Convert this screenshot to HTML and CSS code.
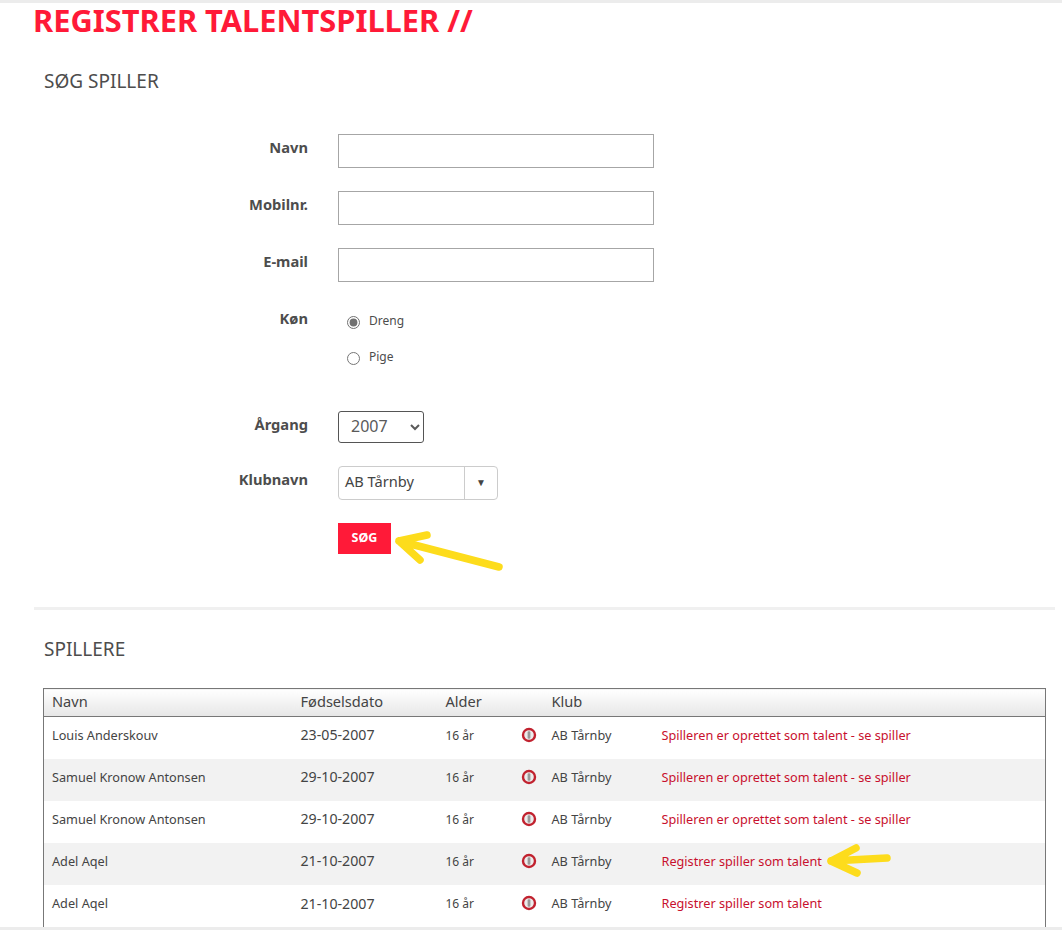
FILE: index.html
```html
<!DOCTYPE html>
<html lang="da">
<head>
  <meta charset="UTF-8">
  <title>Registrer talentspiller</title>
  <link rel="stylesheet" href="styles.css">
</head>
<body>
  <div class="edgeStrip topStrip"></div>

  <div class="page">
    <h1 class="pageTitle">REGISTRER TALENTSPILLER //</h1>

    <h2 class="sectionTitle searchTitle">SØG SPILLER</h2>

    <form class="searchForm">
      <label class="fieldLabel">Navn</label>
      <input class="textInput" type="text">

      <label class="fieldLabel">Mobilnr.</label>
      <input class="textInput" type="text">

      <label class="fieldLabel">E-mail</label>
      <input class="textInput" type="text">

      <label class="fieldLabel">Køn</label>
      <div class="radioGroup">
        <label class="radioRow"><input type="radio" name="gender" checked> Dreng</label>
        <label class="radioRow"><input type="radio" name="gender"> Pige</label>
      </div>

      <label class="fieldLabel">Årgang</label>
      <select class="yearSelect">
        <option>2007</option>
      </select>

      <label class="fieldLabel">Klubnavn</label>
      <div class="clubPicker">
        <span class="clubValue">AB Tårnby</span>
        <span class="clubArrow">▼</span>
      </div>

      <span></span>
      <div class="submitRow">
        <button class="searchBtn" type="button">SØG</button>
        <svg class="arrow searchArrow" width="120" height="48" viewBox="0 0 120 48">
          <path d="M111 40 L11 14 M11 14 L39 8 M11 14 L32 33"></path>
        </svg>
      </div>
    </form>

    <hr class="divider">

    <h2 class="sectionTitle">SPILLERE</h2>

    <table class="playerTable">
      <thead>
        <tr>
          <th class="colName">Navn</th>
          <th class="colBorn">Fødselsdato</th>
          <th class="colAge">Alder</th>
          <th class="colIcon"></th>
          <th class="colClub">Klub</th>
          <th></th>
        </tr>
      </thead>
      <tbody>
        <tr>
          <td>Louis Anderskouv</td>
          <td>23-05-2007</td>
          <td>16 år</td>
          <td><svg class="alertIcon" width="16" height="16" viewBox="0 0 16 16"><circle class="alertRing" cx="8" cy="8" r="6"></circle><rect class="alertMark" x="6.6" y="4.2" width="2.8" height="7.6" rx="1.2"></rect></svg></td>
          <td>AB Tårnby</td>
          <td><a class="rowLink" href="#">Spilleren er oprettet som talent - se spiller</a></td>
        </tr>
        <tr>
          <td>Samuel Kronow Antonsen</td>
          <td>29-10-2007</td>
          <td>16 år</td>
          <td><svg class="alertIcon" width="16" height="16" viewBox="0 0 16 16"><circle class="alertRing" cx="8" cy="8" r="6"></circle><rect class="alertMark" x="6.6" y="4.2" width="2.8" height="7.6" rx="1.2"></rect></svg></td>
          <td>AB Tårnby</td>
          <td><a class="rowLink" href="#">Spilleren er oprettet som talent - se spiller</a></td>
        </tr>
        <tr>
          <td>Samuel Kronow Antonsen</td>
          <td>29-10-2007</td>
          <td>16 år</td>
          <td><svg class="alertIcon" width="16" height="16" viewBox="0 0 16 16"><circle class="alertRing" cx="8" cy="8" r="6"></circle><rect class="alertMark" x="6.6" y="4.2" width="2.8" height="7.6" rx="1.2"></rect></svg></td>
          <td>AB Tårnby</td>
          <td><a class="rowLink" href="#">Spilleren er oprettet som talent - se spiller</a></td>
        </tr>
        <tr>
          <td>Adel Aqel</td>
          <td>21-10-2007</td>
          <td>16 år</td>
          <td><svg class="alertIcon" width="16" height="16" viewBox="0 0 16 16"><circle class="alertRing" cx="8" cy="8" r="6"></circle><rect class="alertMark" x="6.6" y="4.2" width="2.8" height="7.6" rx="1.2"></rect></svg></td>
          <td>AB Tårnby</td>
          <td class="linkCell">
            <a class="rowLink" href="#">Registrer spiller som talent</a>
            <svg class="arrow linkArrow" width="72" height="36" viewBox="0 0 72 36">
              <path d="M66 15 L10 18 M10 18 L35 5 M10 18 L36 30"></path>
            </svg>
          </td>
        </tr>
        <tr class="lastRow">
          <td>Adel Aqel</td>
          <td>21-10-2007</td>
          <td>16 år</td>
          <td><svg class="alertIcon" width="16" height="16" viewBox="0 0 16 16"><circle class="alertRing" cx="8" cy="8" r="6"></circle><rect class="alertMark" x="6.6" y="4.2" width="2.8" height="7.6" rx="1.2"></rect></svg></td>
          <td>AB Tårnby</td>
          <td><a class="rowLink" href="#">Registrer spiller som talent</a></td>
        </tr>
      </tbody>
    </table>
  </div>

  <div class="edgeStrip bottomStrip"></div>
</body>
</html>
```

FILE: styles.css
```css
html, body {
  margin: 0;
  padding: 0;
  height: 100%;
  overflow: hidden;
}

body {
  font-family: "Noto Sans", "Open Sans", sans-serif;
  color: #4d4d4d;
  background: #fff;
}

.edgeStrip {
  position: fixed;
  left: 0;
  right: 0;
  height: 3px;
  background: #ececec;
  z-index: 10;
}

.topStrip {
  top: 0;
}

.bottomStrip {
  bottom: 0;
}

.page {
  padding: 0 7px 0 34px;
}

.pageTitle {
  margin: 0 0 0 -1px;
  font-size: 30.8px;
  line-height: 40px;
  font-weight: 700;
  color: #ff1a38;
}

.sectionTitle {
  margin: 0 0 0 10px;
  font-size: 19px;
  line-height: 28px;
  font-weight: 400;
  color: #4d4d4d;
}

.searchTitle {
  margin-top: 27px;
}

.searchForm {
  display: grid;
  grid-template-columns: 274px 1fr;
  column-gap: 30px;
  align-items: start;
  margin-top: 39px;
}

.fieldLabel {
  font-size: 14.7px;
  line-height: 26px;
  font-weight: 700;
  text-align: right;
}

.textInput {
  box-sizing: border-box;
  display: block;
  width: 316px;
  height: 34px;
  margin-bottom: 23px;
  border: 1px solid #a6a6a6;
  background: #fff;
}

.radioGroup {
  display: flex;
  flex-direction: column;
  gap: 14px;
  height: 83px;
  padding: 5px 0 0 9px;
  box-sizing: border-box;
  margin-bottom: 23px;
}

.radioRow {
  display: flex;
  align-items: center;
  gap: 9px;
  font-size: 12px;
  line-height: 22px;
}

.radioRow input {
  margin: 3px 0 0;
  width: 13px;
  height: 13px;
  accent-color: #707070;
}

.yearSelect {
  display: block;
  width: 86px;
  height: 32px;
  margin-bottom: 23px;
  padding: 0 0 3px 8px;
  font-family: "Noto Sans", sans-serif;
  font-size: 16px;
  color: #5a5a5a;
  background: #fff;
  border: 1px solid #555;
  border-radius: 3px;
}

.clubPicker {
  box-sizing: border-box;
  display: flex;
  width: 160px;
  height: 34px;
  margin-bottom: 23px;
  border: 1px solid #ccc;
  border-radius: 4px;
  font-size: 14.6px;
  color: #444;
}

.clubValue {
  flex: 1;
  padding-left: 6px;
  line-height: 28px;
}

.clubArrow {
  width: 32px;
  border-left: 1px solid #ccc;
  font-size: 10px;
  line-height: 30px;
  text-align: center;
}

.submitRow {
  position: relative;
  height: 54px;
}

.searchBtn {
  display: block;
  width: 53px;
  height: 31px;
  padding: 0 0 3px;
  border: none;
  background: #ff1a38;
  color: #fff;
  font-family: "Noto Sans", sans-serif;
  font-size: 12.5px;
  font-weight: 700;
}

.arrow {
  position: absolute;
  fill: none;
  z-index: 2;
}

.arrow path {
  stroke: #fddc1c;
  stroke-width: 7.5;
  stroke-linecap: round;
  stroke-linejoin: round;
}

.searchArrow {
  left: 50px;
  top: 4px;
}

.divider {
  height: 3px;
  margin: 30px 0 0;
  border: none;
  background: #f0f0f0;
  width: 1021px;
}

.divider + .sectionTitle {
  margin-top: 25px;
}

.playerTable {
  width: 1003px;
  margin: 25px 0 0 9px;
  border-collapse: collapse;
  table-layout: fixed;
  border: 1px solid #777;
  font-size: 12.7px;
}

.playerTable th {
  height: 28px;
  padding: 0 0 4px 8px;
  box-sizing: border-box;
  text-align: left;
  font-size: 14.6px;
  font-weight: 400;
  color: #444;
  background: linear-gradient(#fff, #e6e6e6);
  border-bottom: 1px solid #777;
}

.playerTable td {
  height: 42px;
  padding: 0 0 6px 8px;
  box-sizing: border-box;
  color: #444;
}

.playerTable td:nth-child(2) {
  font-size: 14.2px;
}

.playerTable td:nth-child(3) {
  font-size: 12px;
  padding-bottom: 5px;
}

.playerTable tbody tr:nth-child(even) td {
  background: #f2f2f2;
}

/* runs on past the bottom of the window */
.playerTable .lastRow td {
  height: 48px;
  padding-bottom: 10px;
}

.colName { width: 249px; }
.colBorn { width: 145px; }
.colAge { width: 68px; }
.colIcon { width: 38px; }
.colClub { width: 110px; }

.rowLink {
  color: #c8102e;
  text-decoration: none;
}

.linkCell {
  position: relative;
}

.linkArrow {
  left: 167px;
  top: 0;
}

.alertIcon {
  display: block;
  margin-left: 7px;
}

.alertRing {
  fill: #ececec;
  stroke: #c1222f;
  stroke-width: 2.4;
}

.alertMark {
  fill: #999;
}
```
